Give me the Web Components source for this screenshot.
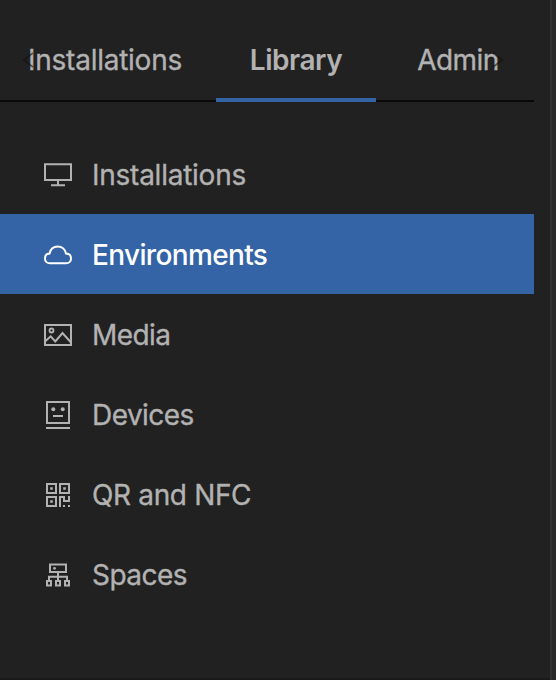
<!DOCTYPE html>
<html lang="en">
<head>
<meta charset="utf-8">
<title>Library</title>
<style>
html,body{margin:0;height:100%;background:#212121;overflow:hidden}
</style>
</head>
<body>
<library-panel></library-panel>
<script>
const icons = {
  monitor: '<path d="M15 14.3H41V30H15ZM28 30V35.3M21 35.3H35" stroke-width="2"/>',
  cloud: '<path d="M20 33.3C16.8 33.3 15 31 15 28.4C15 25.6 17 23.7 19.6 23.5C20.4 19.5 23.4 16.6 27.8 16.6C32.1 16.6 35.2 19.6 36 23.5C38.9 23.7 41 25.7 41 28.4C41 31.1 39.2 33.3 36 33.3Z" stroke-width="2"/>',
  image: '<path d="M15 15H41V35H15ZM15.5 31L20.7 26.3L25.3 31.5L32.5 23L41 32.5" stroke-width="2"/><circle cx="21.5" cy="20.5" r="2" stroke-width="1.8"/>',
  device: '<path d="M17 12H39V33H17ZM16 38H40M23 26H33" stroke-width="2"/><circle cx="23.3" cy="19.2" r="2" class="f"/><circle cx="32.7" cy="19.2" r="2" class="f"/>',
  qr: '<path d="M17 14H26V23H17ZM30 14H39V23H30ZM17 27H26V36H17Z" stroke-width="2"/><path d="M20.2 17.2h2.6v2.6h-2.6zM33.2 17.2h2.6v2.6h-2.6zM20.2 30.2h2.6v2.6h-2.6zM29 26h6v4h3v-4h2v6h-7v-4h-2v9h-2zM33 35h2v2h-2zM38 35h2v2h-2z" class="f"/>',
  tree: '<path d="M20 14.5H36V22H20ZM28 22V30M19 30V26.8H37V30M17 31H21V35.6H17ZM26 31H30V35.6H26ZM35 31H39V35.6H35Z" stroke-width="2"/><circle cx="24.5" cy="18.3" r="1.4" class="f"/>'
};

customElements.define('ui-icon', class extends HTMLElement {
  connectedCallback() {
    this.attachShadow({mode:'open'}).innerHTML = `<style>
      :host{display:block;width:56px;height:48px;flex:none;margin-bottom:2px}
      svg{display:block;fill:none;stroke:currentColor}
      .f{fill:currentColor;stroke:none}
    </style><svg width="56" height="48" viewBox="0 0 56 48">${icons[this.getAttribute('name')]}</svg>`;
  }
});

customElements.define('nav-item', class extends HTMLElement {
  connectedCallback() {
    this.attachShadow({mode:'open'}).innerHTML = `<style>
      :host{display:flex;align-items:center;box-sizing:border-box;height:80px;padding:2px 0 0 30px;color:#b2b2b2}
      :host([selected]){background:#3464a6;color:#fff;font-weight:500;letter-spacing:-.65px;-webkit-text-stroke:0}
      span{margin-left:6px;white-space:nowrap}
    </style><ui-icon name="${this.getAttribute('icon')}"></ui-icon><span><slot></slot></span>`;
  }
});

customElements.define('nav-tab', class extends HTMLElement {
  connectedCallback() {
    this.attachShadow({mode:'open'}).innerHTML = `<style>
      :host{display:flex;align-items:center;justify-content:center;box-sizing:border-box;height:102px;padding-top:22px;color:#b2b2b2;white-space:nowrap;border-bottom:4px solid transparent}
      :host([selected]){font-weight:600;letter-spacing:-.45px;border-color:#3464a6;-webkit-text-stroke:0}
    </style><slot></slot>`;
  }
});

customElements.define('tab-bar', class extends HTMLElement {
  connectedCallback() {
    this.attachShadow({mode:'open'}).innerHTML = `<style>
      :host{display:grid;grid-template-columns:216px 160px 158px;position:relative;width:534px;height:102px;background:linear-gradient(#090909,#090909) 0 100px/100% 2px no-repeat}
      svg{position:absolute;top:52px;fill:none;stroke:#111;stroke-opacity:.6;stroke-width:1.6}
      .l{left:22px}.r{left:492px}
    </style><slot></slot>
    <svg class="l" width="12" height="16"><path d="M11 1L1.5 8L11 15"/></svg>
    <svg class="r" width="12" height="16"><path d="M1 1L10.5 8L1 15"/></svg>`;
  }
});

customElements.define('library-panel', class extends HTMLElement {
  connectedCallback() {
    this.attachShadow({mode:'open'}).innerHTML = `<style>
      :host{display:grid;grid-template-columns:550px 6px;height:680px;font:400 28px/36px Inter,"Liberation Sans",sans-serif;letter-spacing:-.55px;-webkit-text-stroke:.35px currentColor}
      main{box-sizing:border-box;background:#212121;border-bottom:2px solid #1c191b}
      nav{width:534px;padding-top:32px}
      aside{background:#2a2a2a;border-left:2px solid #333}
      nav-tab:first-child{padding-right:6px}
      nav-tab:last-child{padding-left:6px}
      .wide{letter-spacing:-.25px}
      [icon=qr]{letter-spacing:-.35px}
    </style><main>
      <tab-bar><nav-tab class="wide">Installations</nav-tab><nav-tab selected>Library</nav-tab><nav-tab>Admin</nav-tab></tab-bar>
      <nav>
        <nav-item icon="monitor" class="wide">Installations</nav-item>
        <nav-item icon="cloud" selected>Environments</nav-item>
        <nav-item icon="image">Media</nav-item>
        <nav-item icon="device">Devices</nav-item>
        <nav-item icon="qr">QR and NFC</nav-item>
        <nav-item icon="tree">Spaces</nav-item>
      </nav>
    </main><aside></aside>`;
  }
});
</script>
</body>
</html>
